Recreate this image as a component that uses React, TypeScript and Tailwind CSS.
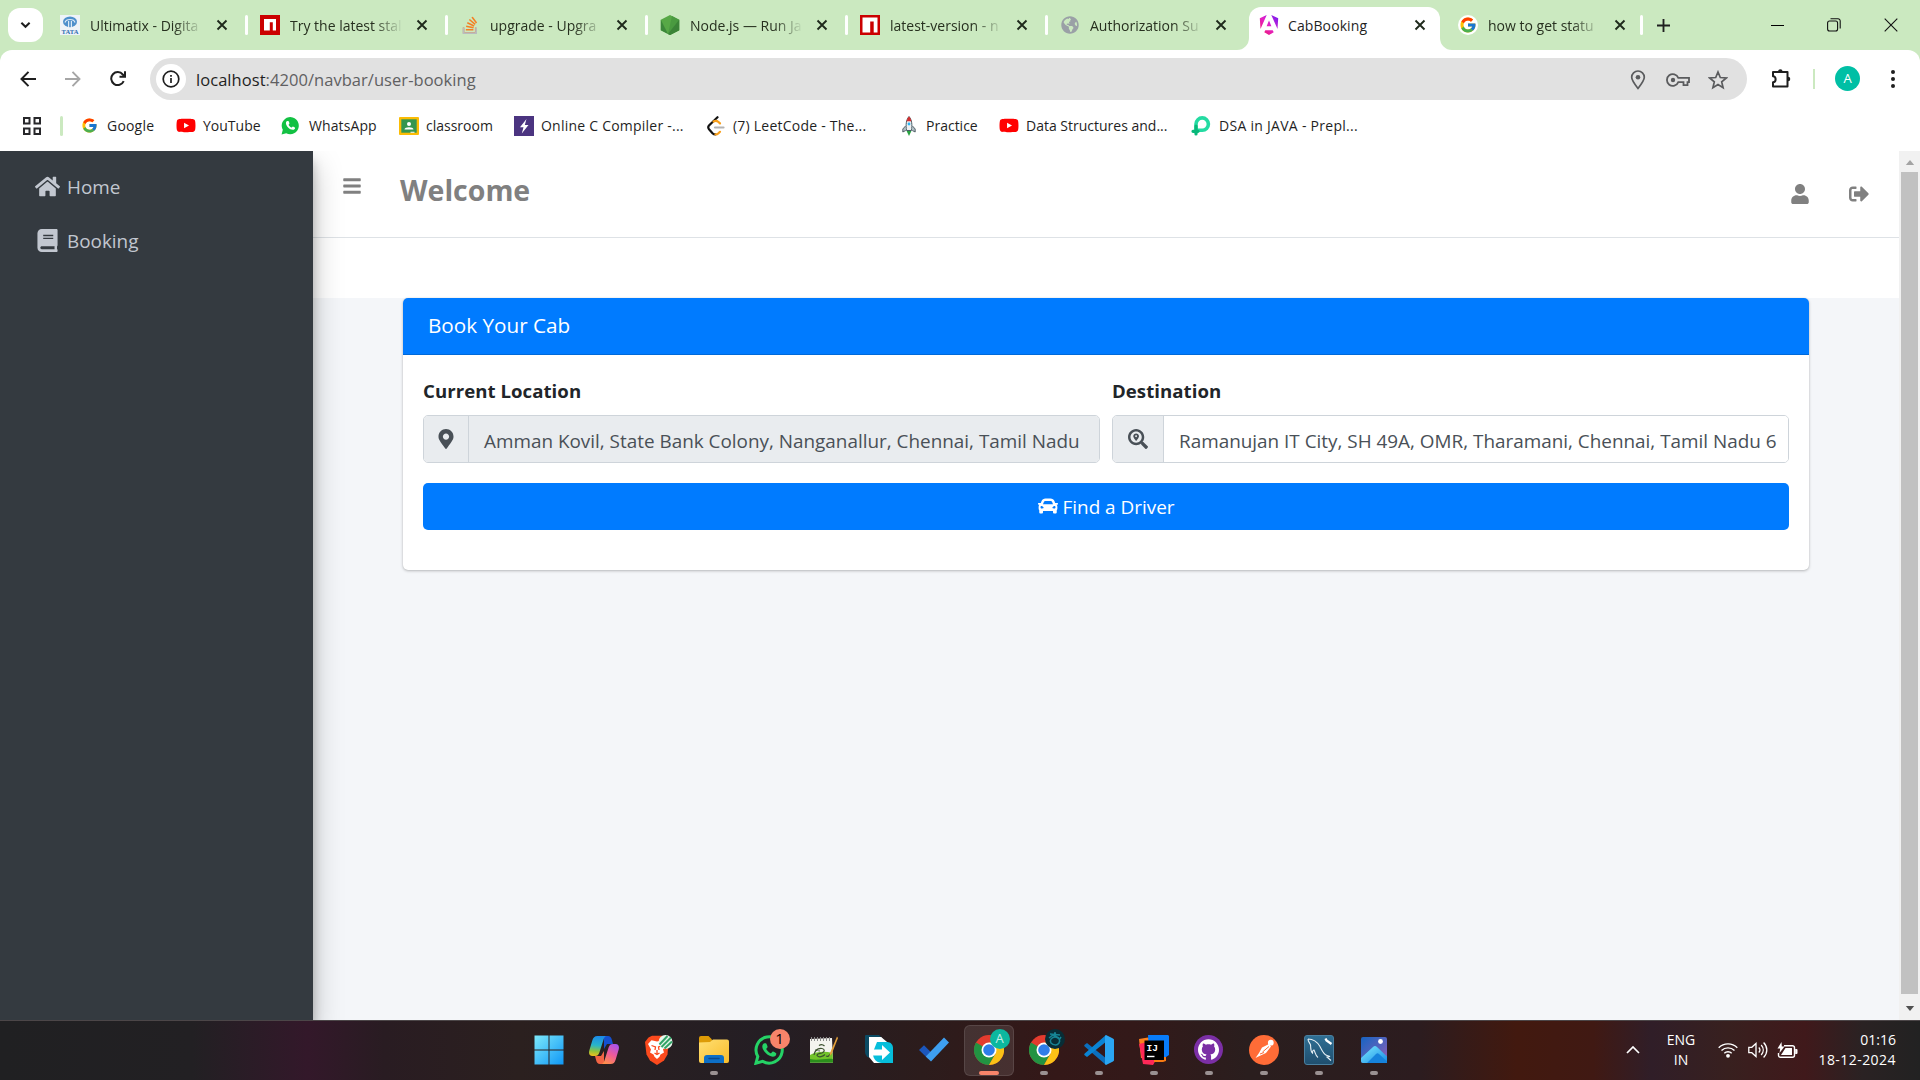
import type { ReactNode } from "react";
import { FcGoogle } from "react-icons/fc";
import { FaHome, FaBook, FaBars, FaUser, FaSignOutAlt, FaMapMarkerAlt, FaSearchLocation, FaCar, FaYoutube, FaGlobeAmericas } from "react-icons/fa";
import { SiStackoverflow, SiGithub } from "react-icons/si";

/* ---------- favicons ---------- */

const TataIcon = () => (
  <svg viewBox="0 0 20 20" className="size-5">
    <rect width="20" height="20" fill="#eef3f8" />
    <ellipse cx="10" cy="6.8" rx="7" ry="5.4" fill="#4d8fcb" />
    <path d="M5 7.5C6 3.5 14 3.5 15 7.5M8.6 12V6M11.4 12V6" stroke="#dbe9f6" strokeWidth="1.2" fill="none" />
    <text x="10" y="19" fontSize="6.6" fontWeight="700" textAnchor="middle" fill="#2f6db0" fontFamily="Liberation Serif, serif">TATA</text>
  </svg>
);

const NpmRed = ({ outlined }: { outlined?: boolean }) => (
  <svg viewBox="0 0 20 20" className="size-5">
    <rect width="20" height="20" fill="#cb0000" />
    {outlined ? (
      <path d="M2.5 2.5h15v15h-3.8V6.5h-3.500v11H2.5z" fill="#fff" />
    ) : (
      <path d="M4 4h12v11.5h-3.2V7.2h-3v8.3H4z" fill="#fff" />
    )}
  </svg>
);

const StackIcon = () => (
  <span className="relative block size-5">
    <SiStackoverflow className="size-5 scale-[0.85] text-[#f48024]" />
    <svg viewBox="0 0 20 20" className="absolute inset-0 size-5">
      <path d="M3.5 12.5v5.6h12.6v-5.6" fill="none" stroke="#b9bcbe" strokeWidth="1.8" />
    </svg>
  </span>
);

const NodeIcon = () => (
  <svg viewBox="0 0 20 20" className="size-5">
    <path d="M10 0l9.200 4.800v10.400L10 20 .8 15.200V4.800z" fill="#57a846" />
    <path d="M.8 4.800 8 19 .8 15.200z" fill="#3c873a" />
    <path d="M19.200 4.800 12 1 8 19l2 1 9.200-4.800z" fill="#4a9a40" />
    <path d="M19.200 4.800v10.400L10 20l-2-1z" fill="#3b8337" />
  </svg>
);

const AngularIcon = () => (
  <svg viewBox="0 0 20 20" className="size-5">
    <defs>
      <linearGradient id="ng" x1="0" y1="1" x2="1" y2="0">
        <stop offset="0" stopColor="#f0195f" />
        <stop offset="0.5" stopColor="#e321c8" />
        <stop offset="1" stopColor="#6a1cf5" />
      </linearGradient>
    </defs>
    <path d="M12.3 0 19.2 3.2 18.5 14zM13.7 15.2l1 2L10 20l-4.7-2.8 1-2zM7.6 11.2 10 5.6l2.4 5.6zM1.5 14 .8 3.2 7.7 0z" fill="url(#ng)" />
  </svg>
);

const GoogleCircle = () => (
  <span className="flex size-5 items-center justify-center rounded-full bg-white">
    <FcGoogle className="size-[18px]" />
  </span>
);

/* ---------- browser chrome ---------- */

const CloseX = () => (
  <svg viewBox="0 0 12 12" className="size-3 shrink-0" fill="none" stroke="#1f2a1c" strokeWidth="1.9">
    <path d="M1.5 1.5l9 9M10.5 1.5l-9 9" />
  </svg>
);

function Tab({ icon, title, width }: { icon: ReactNode; title: string; width: string }) {
  return (
    <div className={`flex h-[50px] shrink-0 items-center ${width}`}>
      <div className="flex w-5 shrink-0 justify-center">{icon}</div>
      <div className="ml-[10px] w-[113px] whitespace-nowrap text-[14px] text-[#27301f] [mask-image:linear-gradient(to_right,black_74%,transparent_100%)]">{title}</div>
      <div className="ml-[13px]"><CloseX /></div>
      <div className="ml-auto h-5 w-[3px] rounded-full bg-white" />
    </div>
  );
}

function TabStrip() {
  return (
    <div className="flex h-[50px] items-center bg-[#cbe9c0]">
      <div className="ml-2 mr-[17px] flex h-[34px] w-[35px] items-center justify-center rounded-xl bg-white">
        <svg viewBox="0 0 12 8" className="h-[8px] w-[11px]" fill="none" stroke="#1f1f1f" strokeWidth="2.2"><path d="M1.5 1.5 6 6l4.5-4.5" /></svg>
      </div>
      <Tab icon={<TataIcon />} title="Ultimatix - Digita" width="w-[188px] mr-[12px]" />
      <Tab icon={<NpmRed />} title="Try the latest stal" width="w-[188px] mr-[12px]" />
      <Tab icon={<StackIcon />} title="upgrade - Upgra" width="w-[188px] mr-[12px]" />
      <Tab icon={<NodeIcon />} title="Node.js — Run Ja" width="w-[188px] mr-[12px]" />
      <Tab icon={<NpmRed outlined />} title="latest-version - n" width="w-[188px] mr-[12px]" />
      <div className="flex h-[50px] w-[177px] items-center">
        <FaGlobeAmericas className="ml-px size-[18px] text-[#9aa0a6]" />
        <div className="ml-[11px] w-[113px] whitespace-nowrap text-[14px] text-[#27301f] [mask-image:linear-gradient(to_right,black_74%,transparent_100%)]">Authorization Su</div>
        <div className="ml-[12px]"><CloseX /></div>
      </div>
      <svg viewBox="0 0 12 12" className="size-3 self-end fill-white"><path d="M12 0v12H0A12 12 0 0 0 12 0" /></svg>
      <div className="flex h-[43px] w-[191px] items-center self-end rounded-t-xl bg-white pb-[7px] pl-[10px]">
        <AngularIcon />
        <div className="ml-[9px] w-[126px] text-[14px] tracking-[0.1px] text-[#1f1f1f]">CabBooking</div>
        <CloseX />
      </div>
      <svg viewBox="0 0 12 12" className="mr-[6px] size-3 self-end fill-white"><path d="M0 0v12h12A12 12 0 0 1 0 0" /></svg>
      <Tab icon={<GoogleCircle />} title="how to get statu" width="w-[185px]" />
      <svg viewBox="0 0 14 14" className="ml-[14px] size-[13px]" stroke="#1f1f1f" strokeWidth="2"><path d="M7 0v14M0 7h14" /></svg>
      <div className="ml-auto flex items-center pr-[22px]">
        <div className="h-px w-[13px] bg-black" />
        <svg viewBox="0 0 14 14" className="ml-[43px] size-[14px]" fill="none" stroke="#111" strokeWidth="1.1">
          <rect x="0.6" y="3" width="10" height="10" rx="2" />
          <path d="M3.5.8H11A2.2 2.2 0 0 1 13.200 3v7.500" />
        </svg>
        <svg viewBox="0 0 14 14" className="ml-[43px] size-[14px]" stroke="#111" strokeWidth="1.1"><path d="M.7.7l12.600 12.600M13.300.7.7 13.300" /></svg>
      </div>
    </div>
  );
}

function Toolbar() {
  return (
    <div className="bg-[#cbe9c0]">
      <div className="flex h-[58px] items-center rounded-t-xl bg-white">
        <div className="ml-[20px] flex w-[130px] items-center gap-[29px]">
          <svg viewBox="0 0 16 16" className="size-4" fill="none" stroke="#1f1f1f" strokeWidth="2"><path d="M8.500.9 1.500 8l7 7.100M1.500 8H16" /></svg>
          <svg viewBox="0 0 16 16" className="size-4" fill="none" stroke="#a6a6a6" strokeWidth="1.900"><path d="M7.500.9l7 7.100-7 7.100M14.500 8H0" /></svg>
          <svg viewBox="0 0 16 16" className="size-4" fill="none" stroke="#1f1f1f" strokeWidth="2"><path d="M13.700 10.200A6.500 6.500 0 1 1 12.800 3.500L15 5.500M15 .3v5.500H9.500" /></svg>
        </div>
        <div className="flex h-[42px] w-[1597px] items-center rounded-full bg-[#e1e1e1] pl-[6px]">
          <div className="flex size-[30px] items-center justify-center rounded-full bg-white">
            <svg viewBox="0 0 18 18" className="size-[18px]" fill="none" stroke="#1f1f1f" strokeWidth="1.700"><circle cx="9" cy="9" r="7.800" /><path d="M9 8v5M9 5v1.700" /></svg>
          </div>
          <div className="ml-[10px] pt-[2px] text-[16.5px] tracking-[0.05px] text-[#5f6062]"><span className="text-[#1f1f1f]">localhost</span>:4200/navbar/user-booking</div>
          <div className="ml-auto flex items-center pr-[19px] pt-px">
            <svg viewBox="0 0 16 20" className="h-5 w-4" fill="none" stroke="#5a5b5d" strokeWidth="1.700"><path d="M8 18.500C3.500 12.800 1.700 10 1.700 7.300a6.300 6.300 0 0 1 12.600 0c0 2.700-1.800 5.500-6.300 11.200z" /><circle cx="8" cy="7.200" r="2.300" fill="#5a5b5d" stroke="none" /></svg>
            <svg viewBox="0 0 24 14" className="ml-[20px] h-[14px] w-6" fill="none" stroke="#5a5b5d" strokeWidth="1.800"><path d="M12.300 4.800H23v4.400h-1.500v3h-4v-3h-5.200A5.900 5.900 0 1 1 12.300 4.800z" /><circle cx="7" cy="7" r="2.200" fill="#5a5b5d" stroke="none" /></svg>
            <svg viewBox="0 0 20 20" className="ml-[18px] size-5" fill="none" stroke="#5a5b5d" strokeWidth="1.700"><path d="M10 2l2.300 5.500 6 .5-4.600 3.900 1.400 5.800L10 14.600l-5.100 3.100 1.400-5.800L1.700 8l6-.5z" /></svg>
          </div>
        </div>
        <svg viewBox="0 0 22 22" className="mb-[2px] ml-[23px] size-[22px]" fill="none" stroke="#1f1f1f" strokeWidth="2"><path d="M3 5h14.500v14.500H3v-4.200c3.500 0 3.500-6 0-6z" strokeLinejoin="round" /><path d="M8 4.500a2.300 2.300 0 0 1 4.600 0zM18 9.700a2.300 2.300 0 0 1 0 4.600z" fill="#1f1f1f" stroke="none" /></svg>
        <div className="ml-[21px] h-5 w-[2px] bg-[#cbe9c0]" />
        <div className="mb-px ml-[20px] flex size-[25px] items-center justify-center rounded-full bg-[#00bfa5] text-[13px] text-white">A</div>
        <svg viewBox="0 0 4 18" className="ml-[31px] h-[18px] w-1 fill-[#1f1f1f]"><circle cx="2" cy="2" r="2" /><circle cx="2" cy="9" r="2" /><circle cx="2" cy="16" r="2" /></svg>
      </div>
    </div>
  );
}

const YouTubeIcon = () => <div className="relative flex size-5 items-center justify-center"><span className="absolute size-2 bg-white" /><FaYoutube className="relative size-[21px] text-[#ff0000]" /></div>;

const WhatsAppBubble = ({ className }: { className: string }) => (
  <svg viewBox="0 0 20 20" className={className}>
    <path d="M.6 19.400 1.900 14.600A9 9 0 1 1 5.500 18.100z" fill="#12c143" />
    <path d="M6.700 5.300c-.7 0-1.500.9-1.500 2.300 0 2.600 3.800 6.900 7.200 6.900 1.400 0 2.400-.9 2.400-2 0-.5-1.900-1.500-2.300-1.500-.5 0-.9 1.200-1.400 1.200-.7 0-3.100-2.300-3.100-3 0-.4.900-.9.900-1.400 0-.4-.8-2.500-1.200-2.500z" fill="#fff" />
  </svg>
);

const ClassroomIcon = () => (
  <svg viewBox="0 0 20 20" className="size-5">
    <rect y="1" width="20" height="18" rx="1" fill="#fbbc04" />
    <rect x="2.300" y="3.300" width="15.400" height="13.400" fill="#34964f" />
    <circle cx="10" cy="8" r="2" fill="#fff" />
    <path d="M5.500 13.500c0-3 9-3 9 0zM11.500 15.700h4v1h-4z" fill="#fff" />
  </svg>
);

const CompilerIcon = () => (
  <svg viewBox="0 0 20 20" className="size-5"><rect width="20" height="20" fill="#4b3480" /><path d="M12.500 3 6 11.200h3.500L7.800 17.500 14.500 9h-3.700z" fill="#fff" /></svg>
);

const LeetIcon = () => (
  <svg viewBox="0 0 18 20" className="h-5 w-[18px]" fill="none" strokeWidth="2.200" strokeLinecap="round">
    <path d="M10.500 1.200 2 9.500c-1 1.200-1 2.500 0 3.700l3.500 4c.8.800 1.800 1.200 3 1.200" stroke="#111" />
    <path d="M8.500 18.400c1.200 0 2.200-.4 3-1.200l1.500-1.400M6.500 5.500c1.700-1 3.500-.8 5 .5l1.500 1.400" stroke="#f89f1b" />
    <path d="M8 11.500h8.500" stroke="#b3b3b3" />
  </svg>
);

const RocketIcon = () => (
  <svg viewBox="0 0 14 20" className="h-5 w-[14px]">
    <path d="M3.500 10 .8 13v3l3-1.500M10.500 10l2.700 3v3l-3-1.500" fill="#b0bec5" stroke="#37474f" strokeWidth=".8" />
    <path d="M7 .5c3 3.500 3.300 8.500 2.500 14h-5C3.700 9 4 4 7 .5z" fill="#eceff1" stroke="#455a64" strokeWidth="1" />
    <path d="M7 .5c1.400 1.400 2.100 3 2.400 4.700H4.600C4.900 3.500 5.600 1.900 7 .5z" fill="#d32f2f" />
    <circle cx="7" cy="8" r="1.400" fill="#29b6f6" />
    <path d="M4.600 15h4.800L7 20z" fill="#29a341" />
  </svg>
);

const PrepIcon = () => (
  <svg viewBox="0 0 20 20" className="size-5" fill="none" strokeLinecap="round">
    <path d="M5 13.500V8a6.200 6.200 0 1 1 6.300 6.300H7" stroke="#24dba2" strokeWidth="3.600" />
    <path d="M2 15.300h5M5 10v8" stroke="#08b87a" strokeWidth="3.200" />
  </svg>
);

function Bookmark({ icon, label, className, text }: { icon: ReactNode; label: string; className: string; text: string }) {
  return (
    <div className={`flex shrink-0 items-center whitespace-nowrap ${className}`}>
      {icon}
      <span className={`text-[14px] leading-5 text-[#1f1f1f] ${text}`}>{label}</span>
    </div>
  );
}

function BookmarksBar() {
  return (
    <div className="flex h-[43px] items-center bg-white pb-[8px] pl-[23px]">
      <svg viewBox="0 0 18 18" className="size-[18px]" fill="none" stroke="#27272a" strokeWidth="2"><path d="M1 1h5.500v5.500H1zM11.500 1H17v5.500h-5.500zM1 11.500h5.500V17H1zM11.500 11.500H17V17h-5.500z" /></svg>
      <div className="ml-[19px] h-5 w-[3px] rounded bg-[#cbe9c0]" />
      <Bookmark className="ml-[18px] w-[95px]" icon={<FcGoogle className="size-[17px]" />} label="Google" text="ml-[9px] tracking-[0.2px]" />
      <Bookmark className="w-[105px]" icon={<YouTubeIcon />} label="YouTube" text="ml-[7px]" />
      <Bookmark className="w-[118px]" icon={<WhatsAppBubble className="size-[19px]" />} label="WhatsApp" text="ml-[9px] tracking-[0.1px]" />
      <Bookmark className="w-[115px]" icon={<ClassroomIcon />} label="classroom" text="ml-[7px]" />
      <Bookmark className="w-[193px]" icon={<CompilerIcon />} label="Online C Compiler -..." text="ml-[7px] tracking-[0.23px]" />
      <Bookmark className="w-[195px]" icon={<LeetIcon />} label="(7) LeetCode - The..." text="ml-[8px] tracking-[0.23px]" />
      <Bookmark className="w-[97px]" icon={<RocketIcon />} label="Practice" text="ml-[10px]" />
      <Bookmark className="w-[192px]" icon={<YouTubeIcon />} label="Data Structures and..." text="ml-[7px]" />
      <Bookmark className="" icon={<PrepIcon />} label="DSA in JAVA - Prepl..." text="ml-[8px] tracking-[0.28px]" />
    </div>
  );
}

/* ---------- page ---------- */

function Sidebar() {
  return (
    <aside className="relative z-10 w-[313px] shrink-0 bg-[#343a40] pt-[9px] text-[18.9px] text-[#c2c7d0] shadow-[0_14px_28px_rgba(0,0,0,0.25),0_10px_10px_rgba(0,0,0,0.22)]">
      <div className="flex h-[54px] items-center pl-[35px]">
        <FaHome className="mb-[2px] size-[25px]" />
        <span className="ml-[7px]">Home</span>
      </div>
      <div className="flex h-[54px] items-center pl-[36px]">
        <FaBook className="mb-[2px] size-[23px]" />
        <span className="ml-[8px]">Booking</span>
      </div>
    </aside>
  );
}

function Header() {
  return (
    <header className="flex h-[87px] items-start border-b border-[#dee2e6] bg-white pl-[28px] text-[#808080]">
      <FaBars className="ml-px mt-[25px] size-5" />
      <h1 className="ml-[38px] mt-[18px] text-[28.5px] font-bold leading-[42px]">Welcome</h1>
      <FaUser className="ml-auto mt-[33px] size-5" />
      <FaSignOutAlt className="ml-[39px] mr-[30px] mt-[33px] size-5" />
    </header>
  );
}

function Field({ label, icon, value, addon, box }: { label: string; icon: ReactNode; value: string; addon: string; box: string }) {
  return (
    <div className="w-[677px]">
      <div className="h-[30px] text-[18.6px] font-bold leading-[29px] tracking-[0.05px] text-[#212529]">{label}</div>
      <div className="mt-[9px] flex h-[48px] overflow-hidden rounded-[5px] border border-[#ced4da]">
        <div className={`flex shrink-0 items-center justify-center border-r border-[#ced4da] bg-[#e9ecef] text-[#495057] ${addon}`}>{icon}</div>
        <div className={`flex min-w-0 flex-1 items-center whitespace-nowrap px-[15px] pt-[4px] text-[18.9px] text-[#495057] ${box}`}>{value}</div>
      </div>
    </div>
  );
}

function BookingCard() {
  return (
    <section className="ml-[90px] h-[272px] w-[1406px] rounded-[5px] bg-white shadow-[0_0_1px_rgba(0,0,0,0.125),0_1px_3px_rgba(0,0,0,0.25)]">
      <div className="flex h-[57px] items-center rounded-t-[5px] border-b border-[#0069d9] bg-[#007bff] pl-[25px] text-[20.7px] text-white">Book Your Cab</div>
      <div className="px-[20px] pt-[21px]">
        <div className="flex gap-[12px]">
          <Field addon="w-[45px]" box="bg-[#e9ecef]" label="Current Location" icon={<FaMapMarkerAlt className="size-[20px]" />} value="Amman Kovil, State Bank Colony, Nanganallur, Chennai, Tamil Nadu" />
          <Field addon="w-[51px]" box="bg-white" label="Destination" icon={<FaSearchLocation className="size-[20px]" />} value="Ramanujan IT City, SH 49A, OMR, Tharamani, Chennai, Tamil Nadu 6" />
        </div>
        <button className="mt-[20px] flex h-[47px] w-full items-center justify-center rounded-[5px] bg-[#007bff] pt-px text-[18.9px] text-white">
          <FaCar className="mb-[2px] mr-[5px] size-5" />
          Find a Driver
        </button>
      </div>
    </section>
  );
}

function Scrollbar() {
  return (
    <div className="flex w-[21px] shrink-0 flex-col items-center bg-[#f1f1f1]">
      <svg viewBox="0 0 10 6" className="mt-[9px] h-[5px] w-[10px] fill-[#a3a3a3]"><path d="M5 0l5 6H0z" /></svg>
      <div className="mt-[7px] h-[822px] w-[17px] bg-[#c1c1c1]" />
      <svg viewBox="0 0 10 6" className="mt-[12px] h-[5px] w-[10px] fill-[#505050]"><path d="M5 6 0 0h10z" /></svg>
    </div>
  );
}

/* ---------- taskbar ---------- */

const WindowsIcon = () => (
  <svg viewBox="0 0 30 30" className="size-[30px]">
    <defs><linearGradient id="win" x1="0" y1="0" x2="1" y2="1"><stop offset="0" stopColor="#7de9fb" /><stop offset="1" stopColor="#0f97f5" /></linearGradient></defs>
    <path d="M.5.5h14v14H.5zM15.500.5h14v14h-14zM.5 15.500h14v14H.5zM15.500 15.500h14v14h-14z" fill="url(#win)" />
  </svg>
);

const CopilotIcon = () => (
  <svg viewBox="0 0 30 28" className="h-[28px] w-[30px]">
    <defs>
      <linearGradient id="cpa" x1="0.300" y1="0" x2="0.200" y2="1"><stop offset="0" stopColor="#1c8ce8" /><stop offset=".45" stopColor="#28b5c9" /><stop offset=".75" stopColor="#8fc43c" /><stop offset="1" stopColor="#f3c21c" /></linearGradient>
      <linearGradient id="cpb" x1="0.800" y1="0" x2="0.300" y2="1"><stop offset="0" stopColor="#a653ee" /><stop offset=".5" stopColor="#ee5a9a" /><stop offset="1" stopColor="#ff8f4a" /></linearGradient>
    </defs>
    <path d="M15 0h4c2.200 0 3.200 1.500 3.800 3.500L24 8h-6l-3 5z" fill="#1450cf" />
    <path d="M15 28h-4c-2.200 0-3.200-1.500-3.800-3.500L6 20h6l3-5z" fill="#f26444" />
    <path d="M8.500 0H18c-2.200 0-3 2-3.600 4l-4 12.500c-.8 2.500-2 3.500-4.400 3.500H3.500C.5 20-.5 17.500.3 14.500l3-10C4.200 1.500 5.500 0 8.500 0z" fill="url(#cpa)" />
    <path d="M21.500 28H12c2.200 0 3-2 3.600-4l4-12.500c.8-2.500 2-3.500 4.400-3.500h2.500c3 0 4 2.500 3.200 5.500l-3 10c-.9 3-2.200 4.500-5.200 4.500z" fill="url(#cpb)" />
  </svg>
);

const BraveIcon = () => (
  <svg viewBox="0 0 29 30" className="h-[30px] w-[29px]">
    <path d="M4.500 2.500 8 .8h10l3.500 1.700L24.500 7l-1 12.500-3.500 6L13 30l-7-4.500-3.500-6L1 7z" fill="#fb4a1d" />
    <path d="M13 6.500l5.500-1.200L22 9l-3 5.500 1 3-3.500 2-1 2.300L13 24l-2.500-2.200-1-2.300-3.500-2 1-3L4 9l3.500-3.700z" fill="#fff" />
    <path d="M7.500 10.500l4 1.500-.5 3M18.500 10.500l-4 1.500.5 3M10.500 18l2.500 1.500 2.500-1.500M13 15v5" stroke="#fb4a1d" strokeWidth="1.300" fill="none" />
    <circle cx="21.500" cy="7" r="7" fill="#e8f6ec" />
    <path d="M15.500 9.500l8-8.500M17.500 12l9.500-9.500M20.500 13.500 28 6.500" stroke="#33a467" strokeWidth="2" />
  </svg>
);

const FolderIcon = () => (
  <svg viewBox="0 0 30 27" className="h-[27px] w-[30px]">
    <defs><linearGradient id="fo" x1="0" y1="0" x2="1" y2="1"><stop offset="0" stopColor="#ffdf73" /><stop offset="1" stopColor="#f9bd2b" /></linearGradient></defs>
    <path d="M0 2a2 2 0 0 1 2-2h7.500l3.500 3.500V9H0z" fill="#dd9b06" />
    <path d="M0 6.500 11 6l3-2.500h14a2 2 0 0 1 2 2V25a2 2 0 0 1-2 2H2a2 2 0 0 1-2-2z" fill="url(#fo)" />
    <path d="M5 27v-5a3 3 0 0 1 3-3h14a3 3 0 0 1 3 3v5z" fill="#0d6fc6" />
    <path d="M10 22.500h10" stroke="#0a4a8f" strokeWidth="1.500" strokeLinecap="round" />
  </svg>
);

const WhatsAppApp = () => (
  <div className="relative">
    <svg viewBox="0 0 30 30" className="size-[30px]">
      <path d="M2 28.200 3.800 21.500A13.100 13.100 0 1 1 8.600 26.300z" fill="none" stroke="#25d366" strokeWidth="3" />
      <path d="M10.500 8.300c-1 0-2.200 1.300-2.200 3.300 0 3.900 5.700 10.100 10.500 10.100 2.100 0 3.500-1.300 3.500-3 0-.7-2.800-2.100-3.400-2.100-.7 0-1.300 1.700-2 1.700-1 0-4.600-3.300-4.600-4.300 0-.6 1.300-1.300 1.300-2 0-.6-1.100-3.700-1.700-3.700z" fill="#25d366" />
    </svg>
    <span className="absolute -right-[6px] -top-[6px] flex size-5 items-center justify-center rounded-full bg-[#f7846a] text-[15px] leading-none text-black">1</span>
  </div>
);

const NotepadIcon = () => (
  <svg viewBox="0 0 29 28" className="h-[28px] w-[29px]">
    <path d="M1 3 23 2l1 24.500H1z" fill="#f4f4ef" />
    <path d="M1 19c7-4 15-4 22.600-2l.4 9.500H1z" fill="#72c42a" />
    <path d="M1 23c8 2 15-1 22.800 0l.2 3.500H1z" fill="#2b8f1c" />
    <path d="M2.500 1v4M5.500 1v4M8.500 1v4M11.500 1v4M14.500 1v4M17.500 1v4M20.500 1v4" stroke="#8c8c8c" strokeWidth="1" />
    <path d="M5 19c1-5 4-7 8-6.500 3 .5 3 3.500 0 4.500-3 .8-5 .5-5 2.500 2 2.500 6 1 8-1M10 9.500c2-1.500 4-1 5.500.5M17 20c2 1 3 0 4-2M6 14l5 1" stroke="#3d5230" strokeWidth="1.200" fill="none" />
    <path d="M28 .5 21 17l-.5 3 2.200-2L29 2z" fill="#e3a03a" />
  </svg>
);

const ShareIcon = () => (
  <svg viewBox="0 0 28 29" className="h-[29px] w-[28px]">
    <path d="M0 1a1 1 0 0 1 1-1h13l5 5v18H6a6 6 0 0 1-6-6z" fill="#0b4a63" />
    <path d="M4 2h12l11 9v11l-5 6H9l-5-6z" fill="#fff" />
    <path d="M12 7h10c4 0 6 3 6 6v15H17c-5 0-9-4-9-9v-2z" fill="#06bedb" />
    <path d="M6 2h10l4 5H8l-2 9z" fill="#fff" />
    <path d="M8 14.500h9V10l8 7.500-8 7.500v-4.500H8z" fill="#fff" />
  </svg>
);

const TodoIcon = () => (
  <svg viewBox="0 0 30 25" className="h-[25px] w-[30px]">
    <path d="M0 13l5-4.800 9 9L9.300 22z" fill="#1c57bd" />
    <path d="M6.800 19.500 25 .5l5 5L12 24.500z" fill="#3e9ff0" />
  </svg>
);

const ChromeIcon = ({ badge }: { badge: "account" | "pattern" }) => (
  <div className="relative">
    <svg viewBox="0 0 30 30" className="size-[30px]">
      <circle cx="15" cy="15" r="15" fill="#e33b2e" />
      <path d="M15 15 2 7.500A15 15 0 0 0 15 30l6.500-11.200z" fill="#229342" />
      <path d="M15 30A15 15 0 0 0 28 7.500H15l6.500 11.200z" fill="#fbc116" />
      <circle cx="15" cy="15" r="7.500" fill="#fff" />
      <circle cx="15" cy="15" r="5.800" fill="#2f7de9" />
    </svg>
    {badge === "account" ? (
      <span className="absolute -right-[6px] -top-[6px] flex size-[20px] items-center justify-center rounded-full bg-[#0cb89f] text-[13px] leading-none text-[#c7efe8]">A</span>
    ) : (
      <svg viewBox="0 0 20 20" className="absolute -right-[6px] -top-[6px] size-[20px]"><circle cx="10" cy="10" r="10" fill="#082d36" /><path d="M5 5l10 1M4 9l4-3 6 3M6 14c-2-3 1-6 4-6s6 3 4 6-6 2-8 0M10 3v3M16 8l-2 3" stroke="#168494" strokeWidth="1.500" fill="none" /></svg>
    )}
  </div>
);

const VsCodeIcon = () => (
  <svg viewBox="0 0 30 30" className="size-[30px]">
    <path d="M1 9.500 3 8l20 16-1 6L.7 11.500c-.8-.7-.5-1.500.3-2z" fill="#0b6fbd" />
    <path d="M1 20.500 3 22 23 6l-1-6L.7 18.500c-.8.7-.5 1.500.3 2z" fill="#0a84d4" />
    <path d="M22 0l6.500 3.200c1 .5 1.500 1 1.500 2v19.600c0 1-.5 1.500-1.500 2L22 30l-1-1V1z" fill="#2ba6f2" />
  </svg>
);

const IntelliJIcon = () => (
  <svg viewBox="0 0 30 30" className="size-[30px]">
    <path d="M0 4 9 2.500 13 6v17H2z" fill="#fc801d" />
    <path d="M0 9l8-2 9 18-3 5-10-1z" fill="#fe2857" />
    <path d="M9 0h20l1 1v19l-6 4-14-4z" fill="#087cfa" />
    <path d="M15 22h12v4l-3 1h-9z" fill="#f97a12" />
    <rect x="5.500" y="5.500" width="19.500" height="19.500" fill="#000" />
    <path d="M8 21.500h7.500" stroke="#fff" strokeWidth="1.400" />
    <text x="7.500" y="15.500" fontSize="9.500" fontWeight="700" fill="#fff" fontFamily="Liberation Mono, monospace">IJ</text>
  </svg>
);

const PostmanIcon = () => (
  <svg viewBox="0 0 30 30" className="size-[30px]">
    <circle cx="15" cy="15" r="15" fill="#ff6c37" />
    <path d="M13 12.500l7-3.500 2 2.500-5 6.500-6.500 3L6.500 23l3.500-5z" fill="#fff" />
    <circle cx="21.800" cy="7.700" r="2.900" fill="#fff" />
    <path d="M13.500 17 20 11.500M11 19l4-1.500" stroke="#ff6c37" strokeWidth="1" />
  </svg>
);

const MySqlIcon = () => (
  <svg viewBox="0 0 30 30" className="size-[30px]">
    <defs><linearGradient id="ms" x1="0" y1="0" x2="0" y2="1"><stop offset="0" stopColor="#2f7095" /><stop offset="1" stopColor="#1f4e6e" /></linearGradient></defs>
    <rect x=".5" y=".5" width="29" height="29" rx="2.500" fill="url(#ms)" stroke="#4a7f9f" />
    <path d="M4 4c5 0 9 2.500 12 7.500 2 4 3.500 8 7 9l3 1-3 .5 4 3.500M4 4c0 3 2 4 2.500 6S6 16 8.500 18c0-2 .5-3 1.500-3 1.500 3 1.500 6 4 7.500" fill="none" stroke="#e8f1f6" strokeWidth="1.100" />
    <path d="M21.500 3.500l1 2 5 3.500" stroke="#fff" strokeWidth="2.300" fill="none" />
  </svg>
);

const PhotosIcon = () => (
  <svg viewBox="0 0 26 26" className="size-[26px]">
    <defs>
      <linearGradient id="ph" x1="0" y1="0" x2="1" y2="1"><stop offset="0" stopColor="#1664c2" /><stop offset=".6" stopColor="#5d63bb" /><stop offset="1" stopColor="#9a5db5" /></linearGradient>
      <linearGradient id="ph2" x1="0" y1="0" x2="1" y2="1"><stop offset="0" stopColor="#7deaff" /><stop offset="1" stopColor="#168ce5" /></linearGradient>
    </defs>
    <rect width="26" height="26" rx="2" fill="url(#ph)" />
    <path d="M0 21 12 10c1.300-1.200 2.700-1.200 4 0l10 9.500V24a2 2 0 0 1-2 2H2a2 2 0 0 1-2-2z" fill="url(#ph2)" />
    <path d="M6 26l9-9c1-1 2-1 3 0l8 7.500V26z" fill="#1683dc" />
    <circle cx="19.500" cy="4.500" r="2.400" fill="#fff" />
  </svg>
);

function TaskIcon({ children, running, active }: { children: ReactNode; running?: boolean; active?: boolean }) {
  return (
    <div className="flex w-[55px] shrink-0 justify-center">
      <div className={`relative flex h-[51px] w-[50px] items-center justify-center rounded-md pb-px ${active ? "bg-white/10 ring-1 ring-inset ring-white/10" : ""}`}>
        {children}
        {running && <span className={`absolute bottom-[1px] h-1 rounded-full ${active ? "w-5 bg-[#f7846a]" : "w-2 bg-[#9a9192]"}`} />}
      </div>
    </div>
  );
}

function Taskbar() {
  return (
    <footer className="flex h-[60px] items-center border-t border-[#4c4648] bg-[linear-gradient(90deg,#202022_0%,#222023_10%,#33182a_16%,#291c22_20%,#2b201f_27%,#241e24_40%,#2c1c1c_48%,#341818_55%,#331919_59%,#2a1e1e_65%,#2c1c1f_74%,#42190f_79%,#401913_83%,#301e28_86%,#38201f_90%,#40191b_94%,#2a2223_97%,#222_100%)] pb-px text-white">
      <div className="ml-[521px] flex">
        <TaskIcon><WindowsIcon /></TaskIcon>
        <TaskIcon><CopilotIcon /></TaskIcon>
        <TaskIcon><BraveIcon /></TaskIcon>
        <TaskIcon running><FolderIcon /></TaskIcon>
        <TaskIcon><WhatsAppApp /></TaskIcon>
        <TaskIcon><NotepadIcon /></TaskIcon>
        <TaskIcon><ShareIcon /></TaskIcon>
        <TaskIcon><TodoIcon /></TaskIcon>
        <TaskIcon running active><ChromeIcon badge="account" /></TaskIcon>
        <TaskIcon running><ChromeIcon badge="pattern" /></TaskIcon>
        <TaskIcon running><VsCodeIcon /></TaskIcon>
        <TaskIcon running><IntelliJIcon /></TaskIcon>
        <TaskIcon running><div className="flex size-[29px] items-center justify-center rounded-full bg-[#7b2fa5]"><SiGithub className="size-[21px]" /></div></TaskIcon>
        <TaskIcon running><PostmanIcon /></TaskIcon>
        <TaskIcon running><MySqlIcon /></TaskIcon>
        <TaskIcon running><PhotosIcon /></TaskIcon>
      </div>
      <div className="ml-auto flex items-center pr-[24px] text-[14px]">
        <svg viewBox="0 0 14 8" className="h-[8px] w-[14px]" fill="none" stroke="#fff" strokeWidth="1.700"><path d="M1 7l6-6 6 6" /></svg>
        <div className="ml-[26px] w-[30px] text-center leading-5">ENG<br />IN</div>
        <svg viewBox="0 0 20 16" className="ml-[22px] h-4 w-5" fill="none" stroke="#fff" strokeWidth="1.400"><path d="M.7 5.800a13 13 0 0 1 18.600 0M3.500 8.600a9.200 9.200 0 0 1 13 0M6.300 11.300a5.300 5.300 0 0 1 7.400 0" /><circle cx="10" cy="13.800" r="1.900" fill="#fff" stroke="none" /></svg>
        <svg viewBox="0 0 20 18" className="ml-[10px] h-[18px] w-5" fill="none" stroke="#fff" strokeWidth="1.300"><path d="M.8 6.300h3L8 2.500v13l-4.200-3.800h-3zM10.800 6.500c1.400 1.500 1.400 3.500 0 5M13.200 4c2.700 3 2.700 7 0 10M15.600 1.500c4.300 4.500 4.300 10.500 0 15" /></svg>
        <svg viewBox="0 0 21 17" className="ml-[9px] h-[17px] w-[21px]" fill="none" stroke="#fff" strokeWidth="1.400"><path d="M7 3.700h8.500a2 2 0 0 1 2 2v7.600a2 2 0 0 1-2 2h-12a2 2 0 0 1-2-2V11" /><path d="M8.500 6H15v7H4z" fill="#fff" stroke="none" /><path d="M18.200 7h1.300a1 1 0 0 1 1 1v3a1 1 0 0 1-1 1h-1.300zM4.500 0 .5 6.500h2.700L2.500 11l5-6.500H4.800z" fill="#fff" stroke="none" /></svg>
        <div className="ml-[20px] flex w-[78px] flex-col items-end whitespace-nowrap leading-5">
          <span>01:16</span>
          <span className="tracking-[0.45px]">18-12-2024</span>
        </div>
      </div>
    </footer>
  );
}

export default function App() {
  return (
    <div className="flex h-[1080px] w-[1920px] flex-col overflow-hidden bg-white font-['Open_Sans','Noto_Sans',sans-serif]">
      <TabStrip />
      <Toolbar />
      <BookmarksBar />
      <div className="flex h-[869px] overflow-hidden">
        <Sidebar />
        <main className="min-w-0 flex-1 bg-[#f4f6f9]">
          <Header />
          <div className="h-[60px] bg-white" />
          <BookingCard />
        </main>
        <Scrollbar />
      </div>
      <Taskbar />
    </div>
  );
}
